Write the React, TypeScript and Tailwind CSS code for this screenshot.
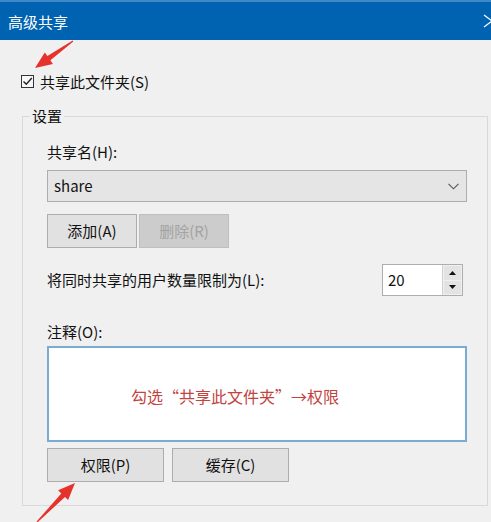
import React from "react";

const FONT = '"Noto Sans CJK SC", "Noto Sans", "Liberation Sans", sans-serif';

function arrowPoints(tx: number, ty: number, hx: number, hy: number) {
  const dx = hx - tx;
  const dy = hy - ty;
  const len = Math.sqrt(dx * dx + dy * dy);
  const ux = dx / len;
  const uy = dy / len;
  const nx = -uy;
  const ny = ux;
  const headLen = 17;
  const bx = hx - ux * headLen;
  const by = hy - uy * headLen;
  const p = (x: number, y: number) => `${x.toFixed(1)},${y.toFixed(1)}`;
  return [
    p(tx + nx * 0.6, ty + ny * 0.6),
    p(bx + nx * 2.6, by + ny * 2.6),
    p(bx + nx * 7, by + ny * 7),
    p(hx, hy),
    p(bx - nx * 7, by - ny * 7),
    p(bx - nx * 2.6, by - ny * 2.6),
    p(tx - nx * 0.6, ty - ny * 0.6),
  ].join(" ");
}

function Btn({ children, disabled, w }: { children: React.ReactNode; disabled?: boolean; w: string }) {
  return (
    <div
      className={
        "h-[34px] flex items-center justify-center border text-[15px] " +
        w +
        (disabled
          ? " bg-[#cccccc] border-[#bfbfbf] text-[#a3a3a3]"
          : " bg-[#e1e1e1] border-[#adadad] text-[#111111]")
      }
    >
      {children}
    </div>
  );
}

export default function App() {
  return (
    <div
      className="relative w-[491px] h-[522px] bg-[#f0f0f0] overflow-hidden flex flex-col"
      style={{ fontFamily: FONT }}
    >
      {/* Title bar */}
      <div className="h-[40px] shrink-0 bg-[#0063b1] border-t-2 border-[#3f88c9] flex items-center justify-between pl-[8px] overflow-hidden">
        <span className="text-white text-[15px] leading-none">高级共享</span>
        <svg width="18" height="14" viewBox="0 0 18 14" className="-mr-[10px]">
          <path d="M1 1 L9 7 L1 13 M17 1 L9 7 L17 13" stroke="#ffffff" strokeWidth="1.2" fill="none" />
        </svg>
      </div>

      {/* Checkbox row */}
      <div className="mt-[34px] ml-[21px] flex items-center gap-[6px] h-[14px]">
        <div className="w-[13px] h-[13px] border border-[#333333] bg-[#f7f7f7] flex items-center justify-center">
          <svg width="11" height="11" viewBox="0 0 11 11">
            <path d="M1.5 5.5 L4.3 8.3 L9.8 2" stroke="#222222" strokeWidth="1.4" fill="none" />
          </svg>
        </div>
        <span className="text-[15px] text-[#111111] leading-none">共享此文件夹(S)</span>
      </div>

      {/* Group box */}
      <fieldset className="mt-[18px] ml-[22px] mr-[3px] border border-[#d9d9d9] pl-[24px] pr-[20px] pb-[23px]">
        <legend className="-ml-[17px] px-[2px] text-[15px] leading-[20px] text-[#111111]">设置</legend>

        <div className="mt-[16px] text-[15px] leading-[20px] text-[#111111]">共享名(H):</div>

        <div className="mt-[8px] h-[32px] bg-[#e5e5e5] border border-[#adadad] flex items-center justify-between pl-[6px] pr-[7px]">
          <span className="text-[15px] text-[#111111]">share</span>
          <svg width="11" height="7" viewBox="0 0 11 7">
            <path d="M0.5 0.8 L5.5 5.8 L10.5 0.8" stroke="#555555" strokeWidth="1.1" fill="none" />
          </svg>
        </div>

        <div className="mt-[12px] flex gap-[2px]">
          <Btn w="w-[90px]">添加(A)</Btn>
          <Btn w="w-[90px]" disabled>
            删除(R)
          </Btn>
        </div>

        <div className="mt-[16px] flex items-center justify-between pr-[4px]">
          <span className="text-[15px] text-[#111111]">将同时共享的用户数量限制为(L):</span>
          <div className="flex h-[32px] border border-[#adadad] bg-white">
            <div className="w-[59px] flex items-center pl-[5px] text-[15px] text-[#111111]">20</div>
            <div className="w-[20px] flex flex-col border-l border-[#d0d0d0] bg-[#f0f0f0] p-[1px] gap-[1px]">
              <div className="flex-1 bg-[#e3e3e3] flex items-center justify-center">
                <svg width="7" height="4" viewBox="0 0 7 4">
                  <path d="M0 4 L3.5 0 L7 4 Z" fill="#111111" />
                </svg>
              </div>
              <div className="flex-1 bg-[#e3e3e3] flex items-center justify-center">
                <svg width="7" height="4" viewBox="0 0 7 4">
                  <path d="M0 0 L3.5 4 L7 0 Z" fill="#111111" />
                </svg>
              </div>
            </div>
          </div>
        </div>

        <div className="mt-[26px] text-[15px] leading-[20px] text-[#111111]">注释(O):</div>

        <div className="mt-[4px] h-[96px] bg-white border-2 border-[#78acd0] pl-[82px] pt-[36px]">
          <span className="text-[16px] leading-[20px] text-[#c1443f]">勾选“共享此文件夹”→权限</span>
        </div>

        <div className="mt-[6px] flex gap-[8px]">
          <Btn w="w-[117px]">权限(P)</Btn>
          <Btn w="w-[117px]">缓存(C)</Btn>
        </div>
      </fieldset>

      {/* Red annotation arrows */}
      <svg className="absolute inset-0 pointer-events-none" width="491" height="522" viewBox="0 0 491 522">
        <polygon points={arrowPoints(73, 41, 35, 68)} fill="#e5322b" />
        <polygon points={arrowPoints(37, 522, 75, 483)} fill="#e5322b" />
      </svg>
    </div>
  );
}
